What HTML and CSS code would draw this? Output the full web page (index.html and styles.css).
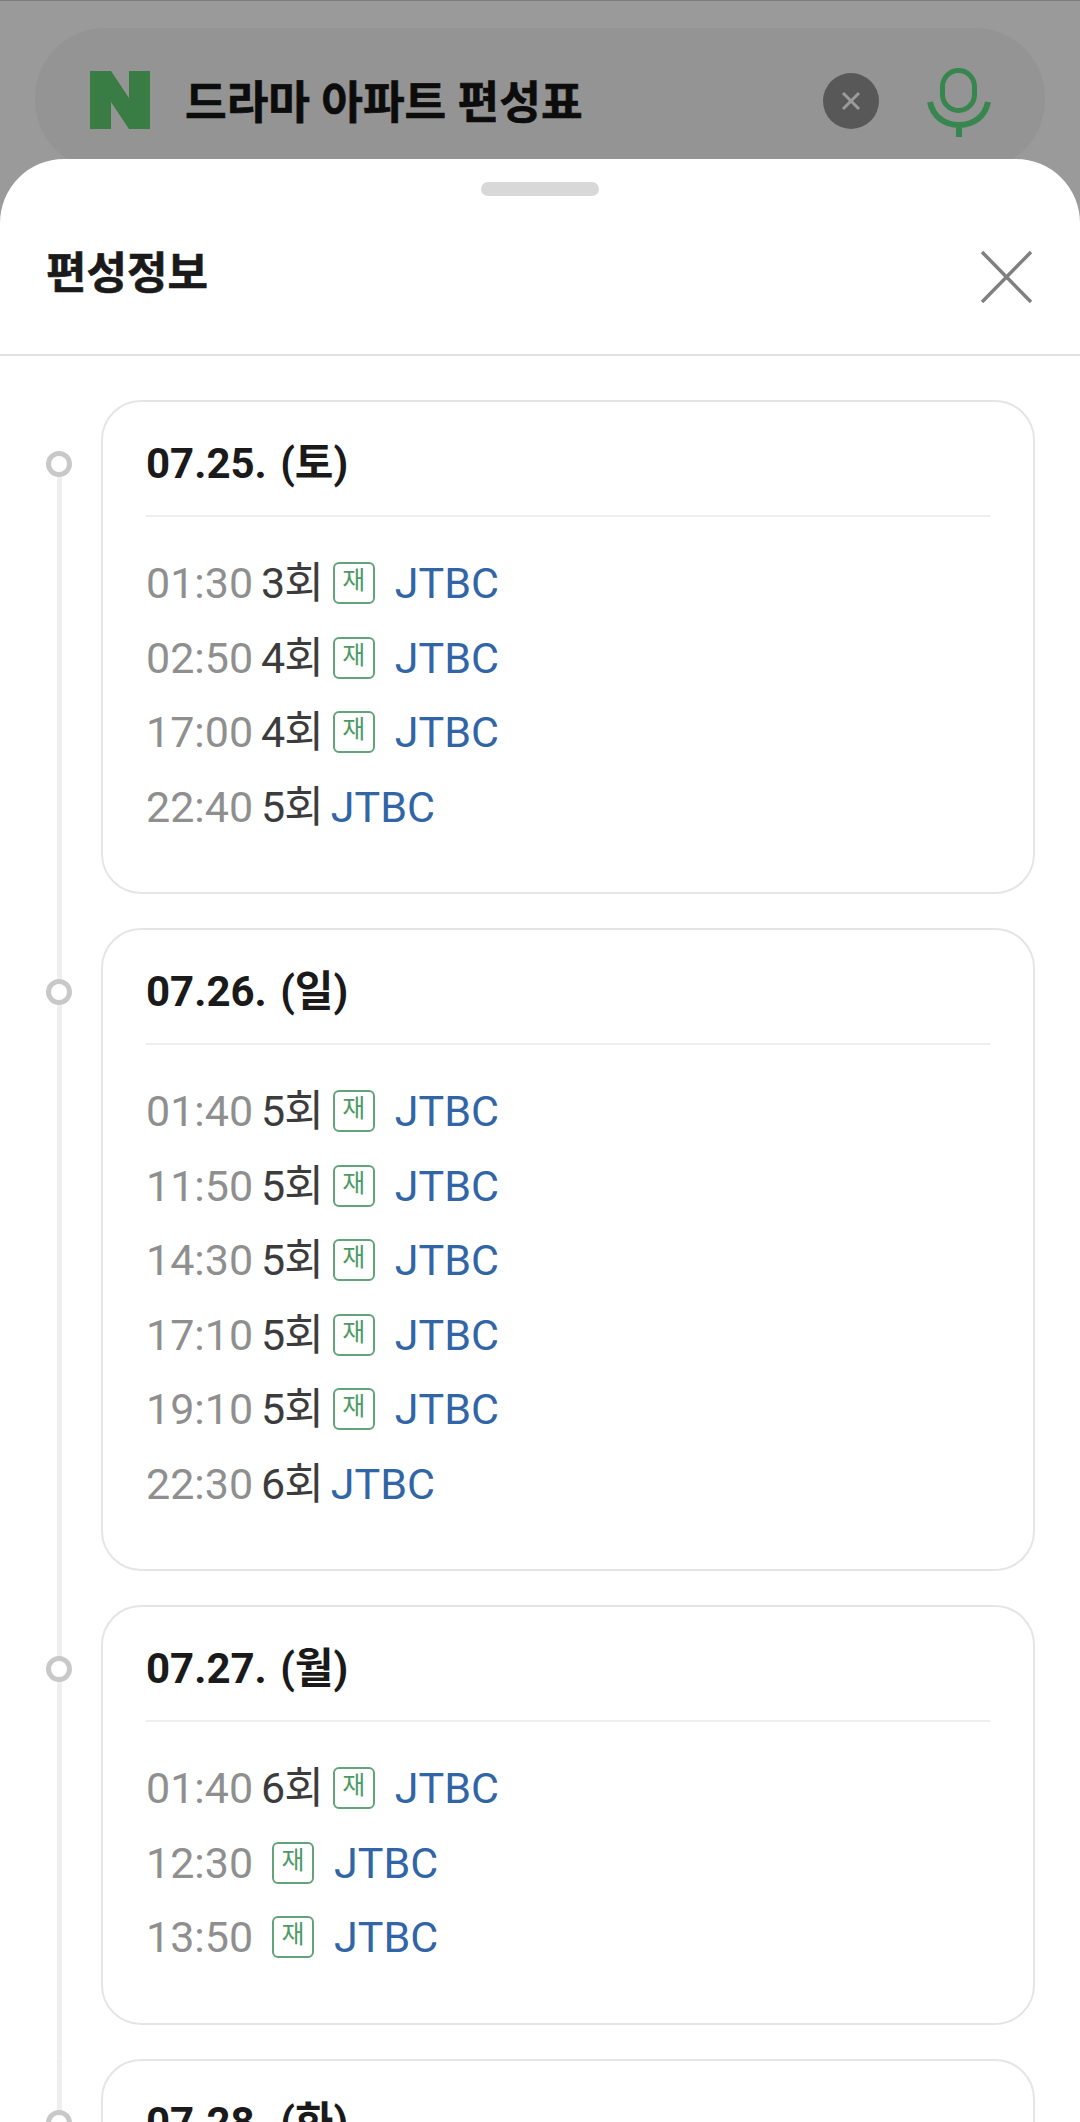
FILE: index.html
```html
<!DOCTYPE html>
<html lang="ko">
<head>
<meta charset="UTF-8">
<meta name="viewport" content="width=device-width, initial-scale=1">
<title>편성정보</title>
<link rel="stylesheet" href="styles.css">
</head>
<body>
<div class="topbar">
	<div class="search">
		<svg class="logo" width="60" height="58" viewBox="0 0 60 58"><path d="M0 0H21L39 27V0H60V58H39L21 31V58H0Z" fill="#3a7d44"/></svg>
		<span class="query">드라마 아파트 편성표</span>
		<span class="clear"><svg width="22" height="22" viewBox="0 0 22 22"><path d="M3 3L19 19M19 3L3 19" stroke="#9b9b9b" stroke-width="3"/></svg></span>
		<svg class="mic" width="64" height="72" viewBox="0 0 64 72"><rect x="15.5" y="3.5" width="32" height="40" rx="16" fill="none" stroke="#37854f" stroke-width="5"/><path d="M3 35C6 50 18 58 32 58S58 50 61 35" fill="none" stroke="#37854f" stroke-width="6"/><path d="M32 58V70" stroke="#37854f" stroke-width="6"/></svg>
	</div>
</div>
<div class="sheet">
	<div class="handle"></div>
	<div class="sheet-head">
		<h2>편성정보</h2>
		<svg width="52" height="52" viewBox="0 0 52 52"><path d="M2 1L51 51M51 1L2 51" stroke="#808080" stroke-width="3.5"/></svg>
	</div>
	<div class="days">
		<div class="day">
			<div class="rail"><i class="dot"></i></div>
			<div class="card">
				<h3>07.25. (토)</h3>
				<ul>
					<li><span class="time">01:30</span><span class="ep">3회</span><span class="re">재</span><a>JTBC</a></li>
					<li><span class="time">02:50</span><span class="ep">4회</span><span class="re">재</span><a>JTBC</a></li>
					<li><span class="time">17:00</span><span class="ep">4회</span><span class="re">재</span><a>JTBC</a></li>
					<li><span class="time">22:40</span><span class="ep">5회</span><a>JTBC</a></li>
				</ul>
			</div>
		</div>
		<div class="day">
			<div class="rail"><i class="dot"></i></div>
			<div class="card">
				<h3>07.26. (일)</h3>
				<ul>
					<li><span class="time">01:40</span><span class="ep">5회</span><span class="re">재</span><a>JTBC</a></li>
					<li><span class="time">11:50</span><span class="ep">5회</span><span class="re">재</span><a>JTBC</a></li>
					<li><span class="time">14:30</span><span class="ep">5회</span><span class="re">재</span><a>JTBC</a></li>
					<li><span class="time">17:10</span><span class="ep">5회</span><span class="re">재</span><a>JTBC</a></li>
					<li><span class="time">19:10</span><span class="ep">5회</span><span class="re">재</span><a>JTBC</a></li>
					<li><span class="time">22:30</span><span class="ep">6회</span><a>JTBC</a></li>
				</ul>
			</div>
		</div>
		<div class="day">
			<div class="rail"><i class="dot"></i></div>
			<div class="card">
				<h3>07.27. (월)</h3>
				<ul>
					<li><span class="time">01:40</span><span class="ep">6회</span><span class="re">재</span><a>JTBC</a></li>
					<li><span class="time">12:30</span><span class="re">재</span><a>JTBC</a></li>
					<li><span class="time">13:50</span><span class="re">재</span><a>JTBC</a></li>
				</ul>
			</div>
		</div>
		<div class="day">
			<div class="rail"><i class="dot"></i></div>
			<div class="card">
				<h3>07.28. (화)</h3>
			</div>
		</div>
	</div>
</div>
</body>
</html>
```

FILE: styles.css
```css
html, body { margin: 0; padding: 0; height: 2122px; overflow: hidden; }
body { background: #9a9a9a; font-family: Roboto, "Noto Sans CJK KR", sans-serif; }

.topbar { height: 159px; padding: 28px 35px 0; box-sizing: border-box; border-top: 1px solid #7c7c7c; }
.search { height: 142px; margin-top: -1px; border-radius: 70px; background: #949494; display: flex; align-items: center; padding: 0 54px 0 55px; }
.logo { flex: none; margin-top: 2px; }
.query { margin-left: 35px; font-size: 45.3px; font-weight: 700; color: #0c0c0c; white-space: nowrap; -webkit-text-stroke: 0.6px #0c0c0c; }
.clear { margin-left: auto; margin-top: 4px; width: 56px; height: 56px; border-radius: 50%; background: #585858; display: flex; align-items: center; justify-content: center; }
.mic { margin-left: 48px; margin-top: 8px; }

.sheet { position: relative; background: white; border-radius: 64px 64px 0 0; }
.handle { position: absolute; top: 23px; left: 481px; width: 118px; height: 14px; border-radius: 7px; background: #d8d8d8; }
.sheet-head { height: 165px; padding: 30px 48px 0 46px; border-bottom: 2px solid #e2e2e2; display: flex; align-items: center; justify-content: space-between; }
.sheet-head h2 { margin: -4px 0 0; font-size: 44px; font-weight: 700; color: #1a1a1a; -webkit-text-stroke: 0.6px #1a1a1a; }
.sheet-head svg { margin-top: 11px; }

.days { padding-top: 44px; }
.day { display: flex; padding: 0 45px 34px 46px; }
.rail { width: 26px; margin-right: 29px; flex: none; background: linear-gradient(#eeeeee, #eeeeee) center / 5px 100% no-repeat; margin-bottom: -34px; }
.day:first-child .rail { background-size: 5px calc(100% - 60px); background-position: bottom; }
.dot { display: block; width: 16px; height: 16px; border: 5px solid #c8c8c8; border-radius: 50%; background: white; margin-top: 51px; }

.card { flex: 1; border: 2px solid #e5e5e5; border-radius: 40px; padding: 40px 43px 48px; }
.card h3 { margin: 0; padding-bottom: 29px; border-bottom: 2px solid #eeeeee; font-size: 42px; line-height: 44px; font-weight: 700; color: #1a1a1a; word-spacing: 3px; }
.card ul { list-style: none; margin: 0; padding: 29px 0 0; }
.card li { display: flex; align-items: center; height: 74.5px; font-size: 43px; line-height: 50px; }
.time { color: #8f8f8f; }
.ep { margin-left: 8px; color: #3c3c3c; letter-spacing: -1px; }
.re { width: 38px; height: 38px; margin-left: 10px; border: 2px solid #63a37a; border-radius: 6px; color: #4c9a66; font-size: 25px; line-height: 34px; text-align: center; }
.time + .re { margin-left: 19px; }
.card a { margin-left: 8px; color: #3165a6; }
.re + a { margin-left: 20px; }
```
